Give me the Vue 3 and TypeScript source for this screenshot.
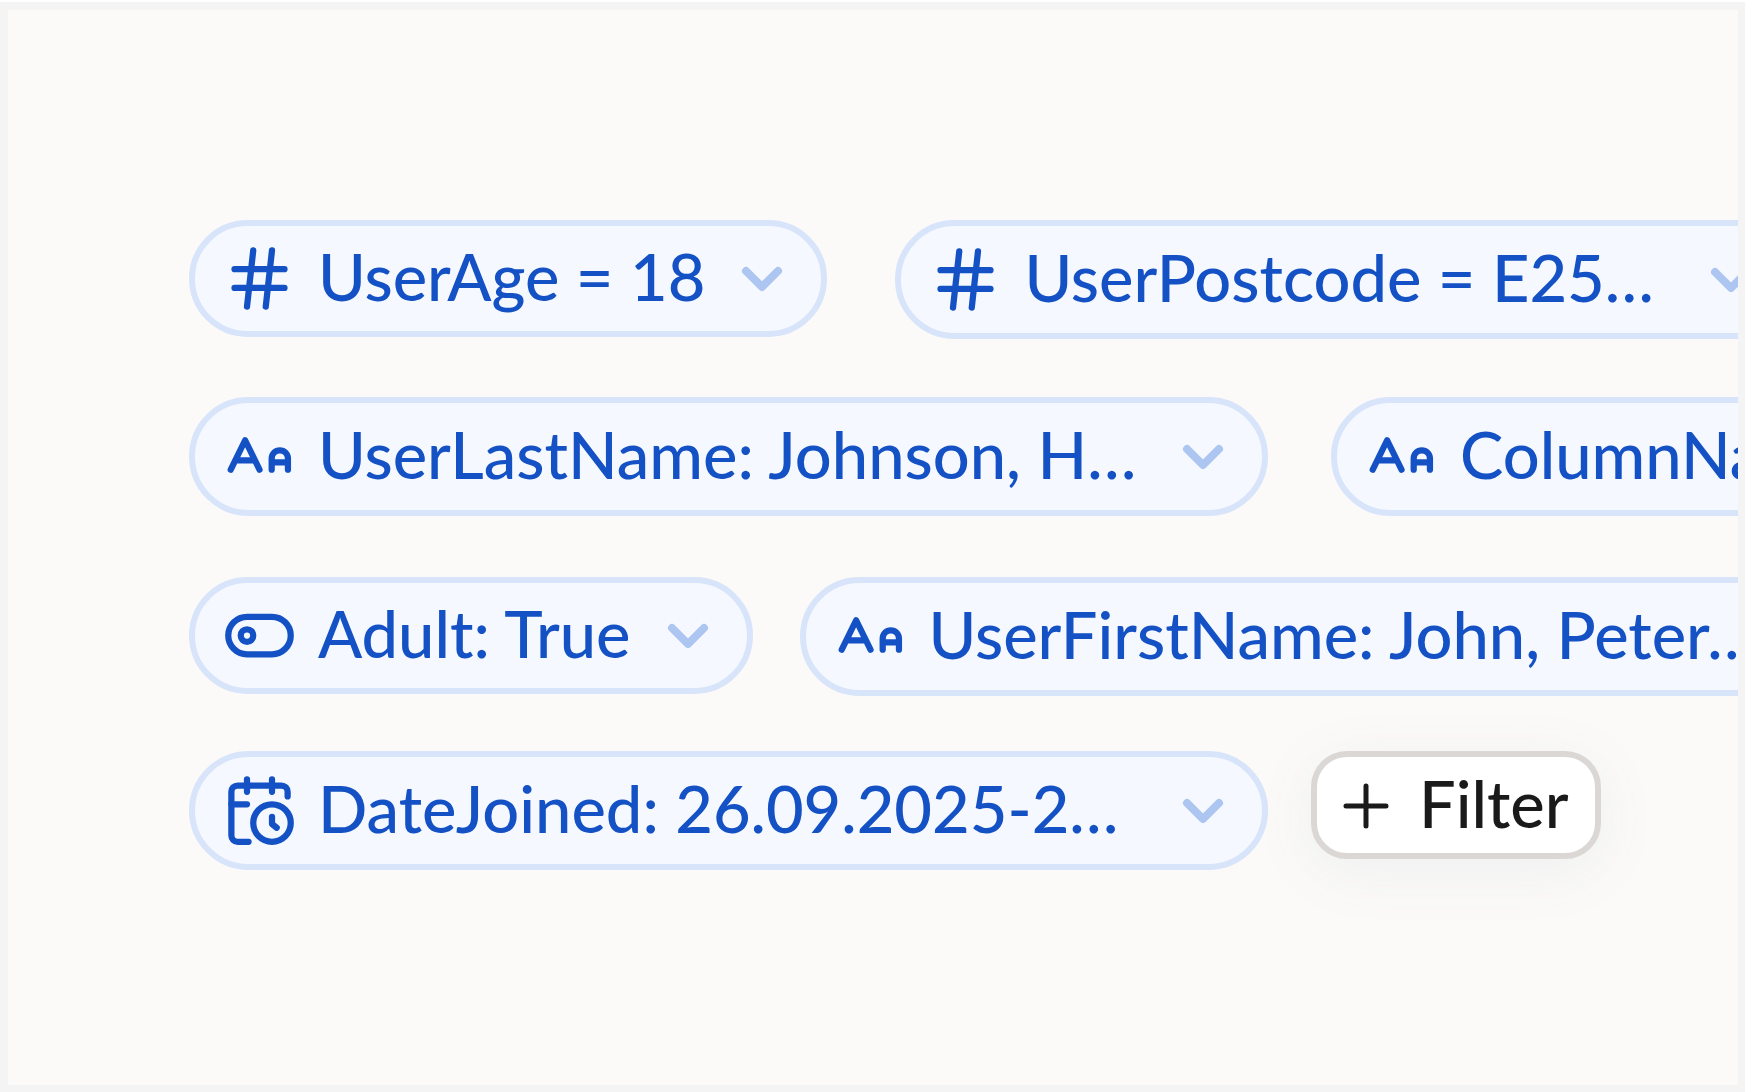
<script setup lang="ts">
type IconName = 'number' | 'text' | 'toggle' | 'date'

interface FilterChip {
  icon: IconName
  label: string
  size: 'compact' | 'medium' | 'wide'
}

interface ChipRow {
  name: string
  chips: FilterChip[]
}

const rows: ChipRow[] = [
  {
    name: 'numbers',
    chips: [
      { icon: 'number', label: 'UserAge = 18', size: 'compact' },
      { icon: 'number', label: 'UserPostcode = E25…', size: 'medium' },
    ],
  },
  {
    name: 'names',
    chips: [
      { icon: 'text', label: 'UserLastName: Johnson, H…', size: 'wide' },
      { icon: 'text', label: 'ColumnName', size: 'wide' },
    ],
  },
  {
    name: 'flags',
    chips: [
      { icon: 'toggle', label: 'Adult: True', size: 'compact' },
      { icon: 'text', label: 'UserFirstName: John, Peter…', size: 'wide' },
    ],
  },
  {
    name: 'dates',
    chips: [{ icon: 'date', label: 'DateJoined: 26.09.2025-2…', size: 'wide' }],
  },
]
</script>

<template>
  <main class="frame">
    <section class="board" aria-label="Filters">
      <div v-for="row in rows" :key="row.name" class="row" :class="row.name">
        <button v-for="chip in row.chips" :key="chip.label" type="button" class="chip" :class="chip.size">
          <svg class="icon" viewBox="0 0 24 24" aria-hidden="true">
            <path v-if="chip.icon === 'number'" d="M4 9h16M4 15h16M10 3 8 21M16 3l-2 18" />
            <path
              v-else-if="chip.icon === 'text'"
              d="M2.8 16.2 7.4 6.8l4.6 9.4M4.5 13.2h5.8M15.9 16.2v-3.6a2.6 2.6 0 0 1 5.2 0v3.6M15.9 13.9h5.2"
            />
            <g v-else-if="chip.icon === 'toggle'">
              <rect x="2" y="6" width="20" height="12" rx="6" />
              <circle cx="8" cy="12" r="2" />
            </g>
            <g v-else>
              <path d="M21 7.5V6a2 2 0 0 0-2-2H5a2 2 0 0 0-2 2v14a2 2 0 0 0 2 2h3.5" />
              <path d="M16 2v4M8 2v4M3 10h5M17.5 17.5 16 16.3V14" />
              <circle cx="16" cy="16" r="6" />
            </g>
          </svg>
          <span class="label">{{ chip.label }}</span>
          <svg class="chevron" viewBox="0 0 42 26" aria-hidden="true">
            <path d="M5 5l16 16L37 5" />
          </svg>
        </button>
        <button v-if="row.name === 'dates'" type="button" class="add">
          <svg class="plus" viewBox="0 0 48 48" aria-hidden="true">
            <path d="M24 5v40M4 25h40" />
          </svg>
          <span class="add-label">Filter</span>
        </button>
      </div>
    </section>
  </main>
</template>

<style>
body {
  margin: 0;
  background: #f4f4f4;
}
</style>

<style scoped>
.frame {
  box-sizing: border-box;
  display: flex;
  min-height: 100vh;
  padding: 8px 7px 7px 8px;
  border-top: 2px solid #ffffff;
  background: #f4f4f4;
}

.board {
  flex: 1;
  min-width: 0;
  display: grid;
  grid-template-rows: 177px 180px 174px auto;
  align-items: start;
  padding: 210px 0 0 181px;
  overflow: hidden;
  background: #fbfaf8;
}

.row {
  display: flex;
  align-items: flex-start;
  min-width: 0;
}

.numbers { gap: 68px; }
.names { gap: 63px; }
.flags { gap: 47px; }
.dates { gap: 43px; }

.chip,
.add {
  box-sizing: border-box;
  display: flex;
  align-items: center;
  flex-shrink: 0;
  font-family: Lato, 'Liberation Sans', sans-serif;
  font-size: 65px;
  font-weight: 500;
  line-height: 78px;
  white-space: nowrap;
  cursor: pointer;
}

.chip {
  height: 119px;
  padding: 0 38px 0 27px;
  border: 6px solid #d8e4fa;
  border-radius: 60px;
  background: #f5f8ff;
  color: #1451c4;
}

.compact { height: 117px; }
.medium { width: 901px; }
.wide { width: 1079px; }

.icon {
  width: 75px;
  height: 75px;
  margin-right: 21px;
  flex-shrink: 0;
}

.icon,
.chevron,
.plus {
  fill: none;
  stroke: currentColor;
  stroke-width: 2;
  stroke-linecap: round;
  stroke-linejoin: round;
}

.label {
  margin-right: 36px;
  padding-bottom: 5px;
}

.chevron {
  width: 42px;
  height: 26px;
  margin-left: auto;
  flex-shrink: 0;
  stroke: #adc5f1;
  stroke-width: 8;
}

.add {
  height: 108px;
  padding: 0 26px 0 25px;
  border: 6px solid #dbd7d4;
  border-radius: 36px;
  background: #ffffff;
  color: #1a1a1a;
  box-shadow: 0 12px 60px rgba(90, 110, 150, 0.08);
}

.add-label {
  padding-bottom: 4px;
}

.plus {
  width: 48px;
  height: 48px;
  margin-right: 29px;
  stroke-width: 5;
}
</style>
